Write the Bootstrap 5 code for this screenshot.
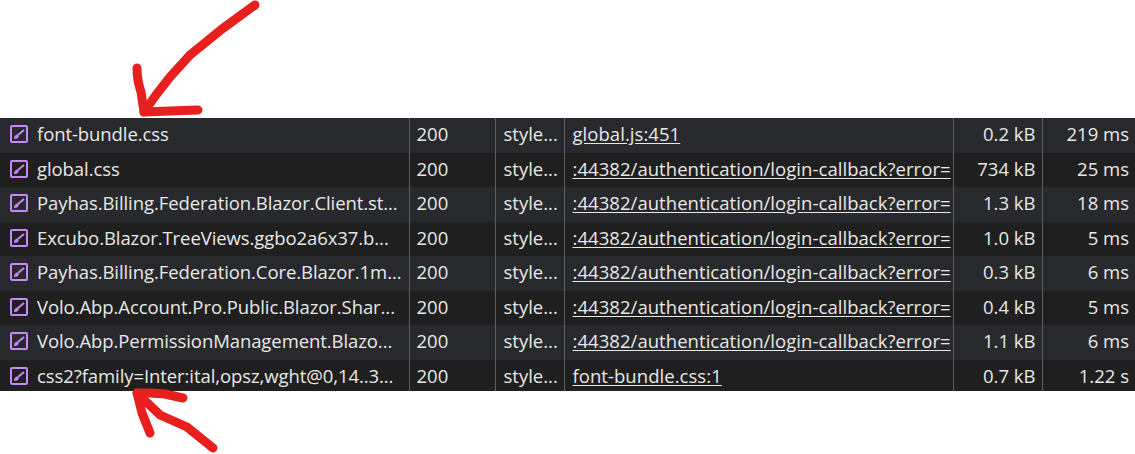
<!DOCTYPE html>
<html lang="en">
<head>
<meta charset="utf-8">
<title>Network requests</title>
<link href="https://cdn.jsdelivr.net/npm/bootstrap@5.3.0/dist/css/bootstrap.min.css" rel="stylesheet">
<style>
html,body{height:454px;overflow:hidden;background:#fff}
.shot{position:relative;width:1135px;height:454px;padding-top:118px}
.clipper{height:273px;overflow:hidden}
.net{--bs-table-bg:transparent;table-layout:fixed;width:1135px;margin:0;font-family:"Open Sans","Noto Sans",sans-serif;font-size:18.5px;color:#e8e8e8;border-collapse:collapse}
.net td{height:34.5px;padding:0 8px;border:0;border-left:1px solid #5e5f62;white-space:nowrap;overflow:hidden;color:#e8e8e8;vertical-align:top;line-height:32px;box-shadow:none}
.net td:first-child{border-left:0;padding-left:10px}
.net tr:nth-child(odd) td{background:#28292c}
.net tr:nth-child(even) td{background:#1f1f1f}
.net td.stat{padding-left:7px}
.net td.num{text-align:right;padding-right:6px}
.net td.init{padding-right:0}
.net td.init a{color:#e8e8e8;text-decoration:underline;text-underline-offset:2px;letter-spacing:.05px}
.filename{display:flex;align-items:center;gap:9px;height:32px}
.filename span{white-space:nowrap;letter-spacing:-.08px}
.filename svg{flex:none}
.ink{position:absolute;left:0;top:0;pointer-events:none}
</style>
</head>
<body>
<div class="shot">
<div class="clipper">
<table class="table net">
<colgroup><col style="width:409px"><col style="width:86px"><col style="width:69px"><col style="width:389px"><col style="width:89px"><col style="width:93px"></colgroup>
<tbody id="rows"></tbody>
</table>
</div>
<svg class="ink" width="1135" height="454" fill="none" stroke="#e81f1f" stroke-width="9" stroke-linecap="round" stroke-linejoin="round">
<path d="M255 5 L222 29 L190 55 L170 77 L156 95 L144 112"/>
<path d="M137 68 C137 78 139 86 141 92 L144 112 L170 111 L198 110"/>
<path d="M137 393 L160 415 L187 427 L213 448"/>
<path d="M183 398 L165 394 L150 393 L137 393 L142 413 L150 433"/>
</svg>
</div>
<script>
var u=":44382/authentication/login-callback?error=";
var d=[["font-bundle.css","global.js:451","0.2 kB","219 ms"],["global.css",u,"734 kB","25 ms"],["Payhas.Billing.Federation.Blazor.Client.st...",u,"1.3 kB","18 ms"],["Excubo.Blazor.TreeViews.ggbo2a6x37.b...",u,"1.0 kB","5 ms"],["Payhas.Billing.Federation.Core.Blazor.1m...",u,"0.3 kB","6 ms"],["Volo.Abp.Account.Pro.Public.Blazor.Shar...",u,"0.4 kB","5 ms"],["Volo.Abp.PermissionManagement.Blazo...",u,"1.1 kB","6 ms"],["css2?family=Inter:ital,opsz,wght@0,14..3...","font-bundle.css:1","0.7 kB","1.22 s"]];
var ic='<svg width="18" height="18" viewBox="0 0 18 18" fill="none"><rect x="1" y="1" width="16" height="16" rx="1" stroke="#c58af9" stroke-width="2"/><path d="M8 10 L14 5" stroke="#c58af9" stroke-width="2"/><path d="M4 14 C4 11 6 9.3 7.6 9.6 L8.8 11 C8.7 12.8 6.5 14.2 4 14Z" fill="#c58af9"/></svg>';
document.getElementById("rows").innerHTML=d.map(function(r){return '<tr><td><div class="filename">'+ic+'<span>'+r[0]+'</span></div></td><td class="stat">200</td><td>style...</td><td class="init"><a href="#">'+r[1]+'</a></td><td class="num">'+r[2]+'</td><td class="num">'+r[3]+'</td></tr>'}).join("");
</script>
</body>
</html>
